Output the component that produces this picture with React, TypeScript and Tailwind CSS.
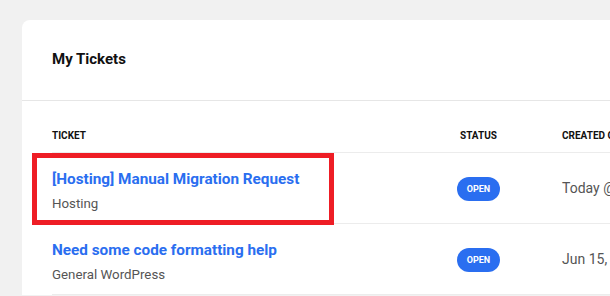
const TICKETS = [
  { title: '[Hosting] Manual Migration Request', category: 'Hosting', status: 'Open', created: 'Today @ 10:42 am', highlight: true },
  { title: 'Need some code formatting help', category: 'General WordPress', status: 'Open', created: 'Jun 15, 2023' },
];

export default function App() {
  return (
    <div className="min-h-screen w-[610px] h-[296px] overflow-hidden bg-[#f1f1f1] pt-[20px] pl-[22px] font-['Roboto',sans-serif]">
      <div className="w-[700px] bg-white rounded-tl-[8px] rounded-tr-[8px]">
        {/* Title */}
        <div className="h-[81px] flex items-center px-[30px] border-b border-[#e6e6e6]">
          <h1 className="text-[15px] font-bold text-[#111] mt-[-1px]">My Tickets</h1>
        </div>

        {/* Table */}
        <div className="px-[30px] pt-[18px]">
          <div className="flex items-center h-[34px] border-b border-[#ececec] text-[10px] font-bold text-[#111] uppercase">
            <div className="w-[405px] shrink-0">Ticket</div>
            <div className="w-[105px] shrink-0 pl-[3px]">Status</div>
            <div className="flex-1 whitespace-nowrap">Created On</div>
          </div>

          {TICKETS.map((t) => (
            <div key={t.title} className="flex items-center h-[71px] border-b border-[#ececec]">
              <div className="relative w-[405px] shrink-0 h-full flex flex-col pt-[17px]">
                {t.highlight && (
                  <div className="absolute left-[-20px] top-0 w-[302px] h-[72px] border-[5px] border-[#ee1d25] pointer-events-none" />
                )}
                <a className="text-[15.3px] font-bold text-[#2a6ef0] leading-[18px]">{t.title}</a>
                <span className="text-[13.3px] text-[#555] leading-[16px] mt-[8px]">{t.category}</span>
              </div>
              <div className="w-[105px] shrink-0">
                <span className="inline-flex items-center justify-center w-[43px] h-[24px] rounded-full bg-[#2a6ef0] text-white text-[9px] font-bold uppercase">
                  {t.status}
                </span>
              </div>
              <div className="flex-1 whitespace-nowrap text-[14px] text-[#555]">{t.created}</div>
            </div>
          ))}
        </div>
      </div>
    </div>
  );
}
